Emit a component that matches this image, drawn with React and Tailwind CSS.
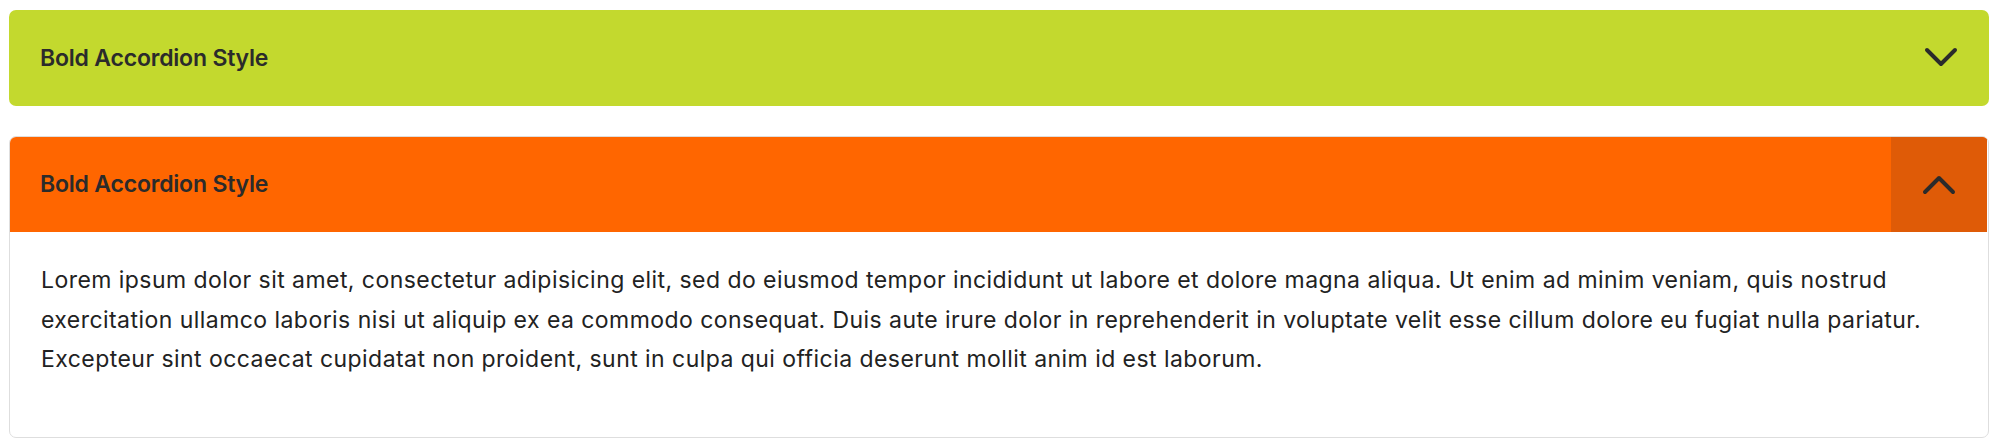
import { useState } from 'react'

const items = [
  { id: 1, title: 'Bold Accordion Style', color: 'green' },
  { id: 2, title: 'Bold Accordion Style', color: 'orange' },
]

const body =
  'Lorem ipsum dolor sit amet, consectetur adipisicing elit, sed do eiusmod tempor incididunt ut labore et dolore magna aliqua. Ut enim ad minim veniam, quis nostrud exercitation ullamco laboris nisi ut aliquip ex ea commodo consequat. Duis aute irure dolor in reprehenderit in voluptate velit esse cillum dolore eu fugiat nulla pariatur. Excepteur sint occaecat cupidatat non proident, sunt in culpa qui officia deserunt mollit anim id est laborum.'

function Chevron({ up }) {
  return (
    <svg width="34" height="22" viewBox="0 0 34 22" fill="none" className="text-[#2b2b2b]">
      <polyline
        points={up ? '3,19 17,5 31,19' : '3,3 17,17 31,3'}
        stroke="currentColor"
        strokeWidth="4"
        strokeLinecap="round"
        strokeLinejoin="round"
      />
    </svg>
  )
}

function AccordionItem({ item, open, onToggle }) {
  const green = item.color === 'green'
  return (
    <div className={open ? 'rounded-[7px] border border-[#dedede] overflow-hidden' : 'rounded-[7px] overflow-hidden'}>
      <button
        onClick={onToggle}
        className={`w-full h-[96px] flex items-stretch text-left ${green ? 'bg-[#c3d92e]' : 'bg-[#ff6600]'} ${open ? '-m-px w-[calc(100%+2px)]' : ''}`}
      >
        <span className="flex-1 flex items-center pl-[31px] text-[23px] font-semibold text-[#2b2b2b] tracking-[-0.2px]">
          {item.title}
        </span>
        <span className={`w-[96px] flex items-center justify-center ${open ? 'bg-[#df5b07]' : ''}`}>
          <Chevron up={open} />
        </span>
      </button>
      {open && (
        <div className="px-[31px] pt-[30px] pb-[57px]">
          <p className="text-[23px] leading-[39.5px] tracking-[0.45px] text-[#222]">{body}</p>
        </div>
      )}
    </div>
  )
}

export default function App() {
  const [openId, setOpenId] = useState(2)
  return (
    <div className="pl-[9px] pr-[18px] pt-[10px] bg-white" style={{ fontFamily: 'Inter, "Liberation Sans", sans-serif' }}>
      <div className="flex flex-col gap-[30px]">
        {items.map((it) => (
          <AccordionItem key={it.id} item={it} open={openId === it.id} onToggle={() => setOpenId(openId === it.id ? null : it.id)} />
        ))}
      </div>
    </div>
  )
}
